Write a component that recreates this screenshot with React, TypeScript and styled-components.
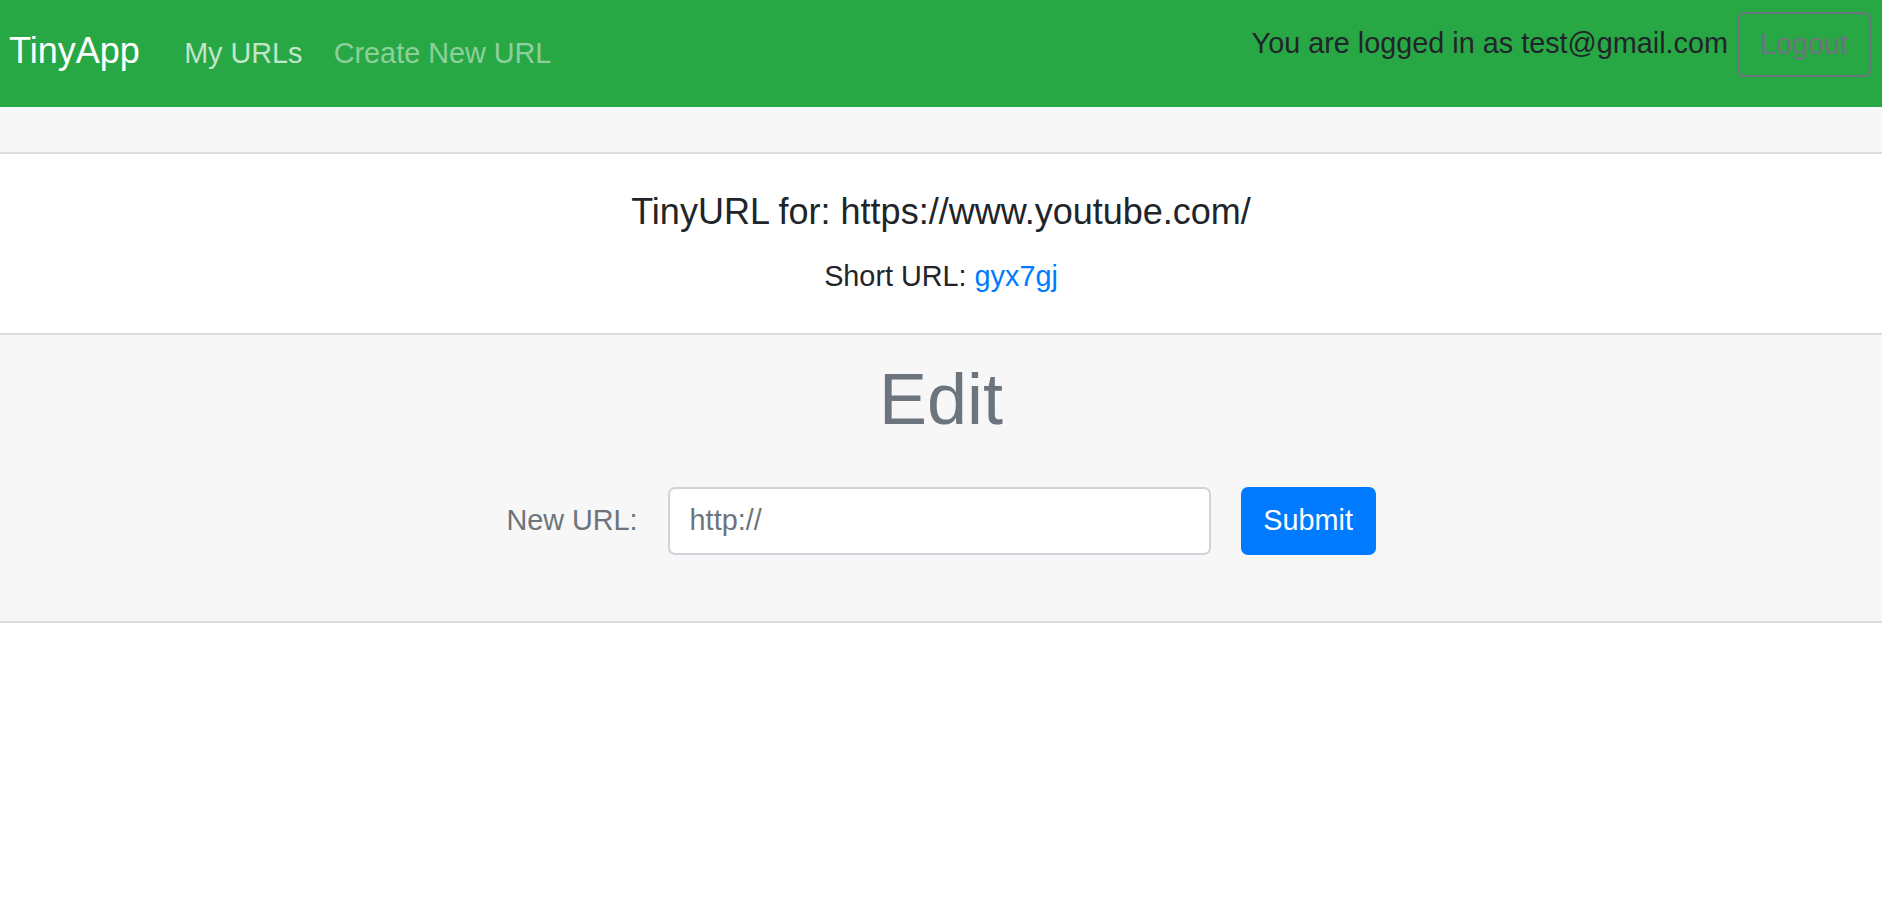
import styled, { createGlobalStyle } from "styled-components";

const GlobalStyle = createGlobalStyle`
  html, body {
    margin: 0;
    padding: 0;
    background: #fff;
    font-family: "Liberation Sans", Arial, sans-serif;
    color: #212529;
  }
  * { box-sizing: border-box; }
`

const Navbar = styled.nav`
  height: 107px;
  background: #28a745;
  display: flex;
  justify-content: space-between;
  align-items: flex-start;
  padding: 0 11px 0 9px;
`
const NavLeft = styled.div`
  display: flex;
  align-items: baseline;
  margin-top: 23.5px;
`
const Brand = styled.a`
  font-size: 36px;
  line-height: 54px;
  color: #fff;
  text-decoration: none;
  margin-right: 28.8px;
`
const NavLink = styled.a<{ $active?: boolean }>`
  font-size: 28.8px;
  line-height: 43.2px;
  padding: 0 15.6px;
  color: ${p => (p.$active ? "rgba(255,255,255,.72)" : "rgba(255,255,255,.48)")};
  text-decoration: none;
`
const NavRight = styled.div`
  display: flex;
  align-items: baseline;
  margin-top: 12px;
`
const NavText = styled.span`
  font-size: 28.8px;
  line-height: 43.2px;
  color: #212529;
  position: relative;
  top: -1px;
`
const OutlineButton = styled.button`
  margin-left: 9px;
  height: 65px;
  width: 134px;
  font-family: inherit;
  font-size: 28.8px;
  line-height: 43.2px;
  color: #6c757d;
  background: transparent;
  border: 2px solid #6c757d;
  border-radius: 7px;
  padding: 0;
`

const Band = styled.div`
  height: 47px;
  background: #f7f7f7;
  border-bottom: 2px solid #dcdcdc;
`

const InfoSection = styled.section`
  text-align: center;
  padding: 36px 0 35px;
`
const Heading = styled.h5`
  margin: 0 0 22px;
  font-size: 36px;
  line-height: 43.2px;
  font-weight: normal;
  color: #212529;
`
const Para = styled.p`
  margin: 0;
  font-size: 28.8px;
  line-height: 43.2px;
`
const Link = styled.a`
  color: #007bff;
  text-decoration: none;
`

const EditSection = styled.section`
  background: #f7f7f7;
  border-top: 2px solid #dcdcdc;
  border-bottom: 2px solid #dcdcdc;
  padding: 21px 0 66px;
  text-align: center;
`
const Title = styled.h1`
  margin: 0 0 44px;
  font-size: 72px;
  line-height: 86.4px;
  font-weight: normal;
  color: #6c757d;
`
const FormRow = styled.form`
  display: flex;
  justify-content: center;
  align-items: center;
  gap: 30px;
`
const Label = styled.label`
  font-size: 28.8px;
  line-height: 43.2px;
  color: #6c757d;
`
const Input = styled.input`
  width: 543px;
  height: 68px;
  font-family: inherit;
  font-size: 28.8px;
  color: #495057;
  background: #fff;
  border: 2px solid #ced4da;
  border-radius: 7px;
  padding: 0 20px;
  &::placeholder {
    color: #6c757d;
  }
`
const SubmitButton = styled.button`
  width: 135px;
  height: 68px;
  font-family: inherit;
  font-size: 28.8px;
  color: #fff;
  background: #007bff;
  border: none;
  border-radius: 7px;
  padding: 0;
`

export default function App() {
  return (
    <>
      <GlobalStyle />
      <Navbar>
        <NavLeft>
          <Brand href="#">TinyApp</Brand>
          <NavLink $active href="#">My URLs</NavLink>
          <NavLink href="#">Create New URL</NavLink>
        </NavLeft>
        <NavRight>
          <NavText>You are logged in as test@gmail.com</NavText>
          <OutlineButton>Logout</OutlineButton>
        </NavRight>
      </Navbar>
      <Band />
      <InfoSection>
        <Heading>TinyURL for: https://www.youtube.com/</Heading>
        <Para>Short URL: <Link href="#">gyx7gj</Link></Para>
      </InfoSection>
      <EditSection>
        <Title>Edit</Title>
        <FormRow onSubmit={e => e.preventDefault()}>
          <Label htmlFor="longURL">New URL:</Label>
          <Input id="longURL" type="text" placeholder="http://" />
          <SubmitButton type="submit">Submit</SubmitButton>
        </FormRow>
      </EditSection>
    </>
  )
}
